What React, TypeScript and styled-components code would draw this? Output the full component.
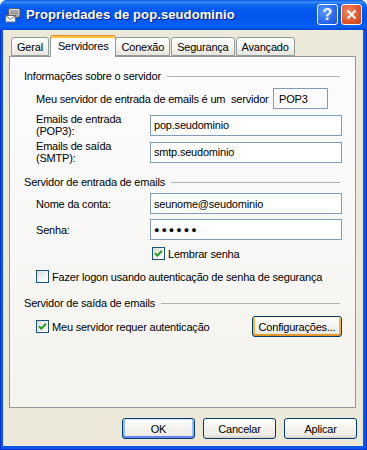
import React from "react";
import styled, { createGlobalStyle } from "styled-components";

const GlobalStyle = createGlobalStyle`
  html, body { margin: 0; padding: 0; background: #ffffff; }
  body {
    font-family: "Liberation Sans", Arial, sans-serif;
    font-size: 11px;
    letter-spacing: -0.2px;
    color: #000;
  }
  #root { width: 367px; height: 450px; }
`;

const Window = styled.div`
  width: 367px;
  height: 450px;
  display: flex;
  flex-direction: column;
  overflow: hidden;
  border-radius: 7px 7px 0 0;
  background: #0055ea;
`;

const TitleBar = styled.div`
  flex: none;
  height: 30px;
  box-sizing: border-box;
  display: flex;
  align-items: center;
  padding: 0 5px 1px 5px;
  background: linear-gradient(
    180deg,
    #0a5ae8 0%,
    #3d8ff8 7%,
    #1469f2 15%,
    #0058ee 35%,
    #0054eb 60%,
    #0460f6 85%,
    #0256ec 94%,
    #003fd9 100%
  );
`;

const TitleIcon = styled.svg`
  width: 16px;
  height: 16px;
  flex: none;
`;

const TitleText = styled.div`
  margin-left: 5px;
  font-family: "Liberation Sans", Arial, sans-serif;
  font-weight: bold;
  font-size: 13px;
  letter-spacing: 0.1px;
  color: #ffffff;
  text-shadow: 1px 1px 0 #0a1e8a;
  white-space: nowrap;
`;

const CaptionButtons = styled.div`
  margin-left: auto;
  display: flex;
  gap: 3px;
`;

const CaptionButton = styled.div<{ $kind: "help" | "close" }>`
  width: 21px;
  height: 21px;
  box-sizing: border-box;
  border: 1px solid #ffffff;
  border-radius: 3px;
  display: flex;
  align-items: center;
  justify-content: center;
  background: ${(p) =>
    p.$kind === "close"
      ? "radial-gradient(circle at 35% 35%, #f08a64 0%, #e0582c 55%, #c23d14 100%)"
      : "radial-gradient(circle at 35% 35%, #5f9cff 0%, #2d6cf0 55%, #1a4fd6 100%)"};
  color: #ffffff;
  font-family: "Liberation Sans", Arial, sans-serif;
  font-weight: bold;
  font-size: 16px;
  letter-spacing: 0;
  line-height: 1;
`;

const Frame = styled.div`
  flex: 1;
  display: flex;
  padding: 0 4px 4px 3px;
  background: #0758e8;
  box-shadow: inset 1px 0 0 #0831d9, inset -1px 0 0 #0831d9, inset 0 -1px 0 #0831d9;
  min-height: 0;
`;

const Body = styled.div`
  flex: 1;
  display: flex;
  flex-direction: column;
  background: #ece9d8;
  padding: 5px 7px 7px 6px;
`;

const TabStrip = styled.div`
  display: flex;
  align-items: flex-end;
  height: 22px;
  padding-left: 2px;
  margin-bottom: -1px;
  position: relative;
  z-index: 1;
`;

const Tab = styled.div<{ $active?: boolean }>`
  box-sizing: border-box;
  height: ${(p) => (p.$active ? "22px" : "19px")};
  margin: ${(p) => (p.$active ? "0 -1px 0 0" : "0 1px 1px 0")};
  padding: ${(p) => (p.$active ? "0 7px 2px" : "0 5px")};
  display: flex;
  align-items: center;
  border: 1px solid #919b9c;
  border-bottom: ${(p) => (p.$active ? "none" : "1px solid #919b9c")};
  border-top-color: ${(p) => (p.$active ? "#e68b2c" : "#919b9c")};
  border-radius: 3px 3px 0 0;
  background: ${(p) =>
    p.$active ? "#fcfcfe" : "linear-gradient(180deg, #ffffff 0%, #f4f3ee 60%, #e7e5dc 100%)"};
  box-shadow: ${(p) => (p.$active ? "inset 0 2px 0 #ffc83c" : "none")};
  position: relative;
  z-index: ${(p) => (p.$active ? 2 : 1)};
  white-space: nowrap;
`;

const Panel = styled.div`
  flex: 1;
  display: flex;
  flex-direction: column;
  border: 1px solid #919b9c;
  background: linear-gradient(180deg, #fcfcfe 0%, #f4f3ee 100%);
  padding: 12px 13px 0 14px;
`;

const GroupHeader = styled.div<{ $mt: number }>`
  display: flex;
  align-items: center;
  height: 13px;
  margin-top: ${(p) => p.$mt}px;
  white-space: nowrap;
  &::after {
    content: "";
    flex: 1;
    height: 1px;
    margin: 1px 2px 0 6px;
    background: #b4b2a8;
  }
`;

const ServerTypeRow = styled.div`
  display: flex;
  align-items: center;
  height: 21px;
  margin-top: 6px;
  padding-left: 12px;
  white-space: nowrap;
`;

const ReadOnlyBox = styled.div`
  margin-left: auto;
  margin-right: 14px;
  width: 55px;
  height: 21px;
  box-sizing: border-box;
  border: 1px solid #7f9db9;
  padding: 0 5px;
  display: flex;
  align-items: center;
  flex: none;
`;

const FieldRow = styled.div<{ $mt: number; $h: number }>`
  display: grid;
  grid-template-columns: 114px 1fr;
  align-items: center;
  min-height: ${(p) => p.$h}px;
  margin-top: ${(p) => p.$mt}px;
  padding-left: 12px;
`;

const FieldLabel = styled.label`
  line-height: 12px;
`;

const TextBox = styled.input<{ $secret?: boolean }>`
  width: 100%;
  height: 21px;
  box-sizing: border-box;
  margin: 0;
  border: 1px solid #7f9db9;
  background: #ffffff;
  padding: 0 3px;
  font-family: "Liberation Sans", Arial, sans-serif;
  font-size: ${(p) => (p.$secret ? "9px" : "11px")};
  letter-spacing: ${(p) => (p.$secret ? "2px" : "-0.2px")};
  color: #000;
  outline: none;
`;

const CheckRow = styled.div<{ $mt: number; $indent: number }>`
  display: flex;
  align-items: center;
  gap: 3px;
  margin-top: ${(p) => p.$mt}px;
  padding-left: ${(p) => p.$indent}px;
  white-space: nowrap;
`;

const CheckBox = styled.span`
  width: 13px;
  height: 13px;
  box-sizing: border-box;
  border: 1px solid #1c5180;
  background: linear-gradient(135deg, #dcdcd7 0%, #f2f2ef 55%, #ffffff 100%);
  display: flex;
  align-items: center;
  justify-content: center;
  flex: none;
`;

const AuthRow = styled.div`
  display: flex;
  align-items: center;
  height: 21px;
  margin-top: 7px;
`;

const XpButton = styled.button<{ $state?: "default" | "hot" }>`
  width: ${(p) => (p.$state === "hot" ? "90px" : "73px")};
  height: 21px;
  box-sizing: border-box;
  margin: 0;
  padding: 0;
  border: 1px solid #003c74;
  border-radius: 3px;
  background: linear-gradient(180deg, #ffffff 0%, #f6f5f1 40%, #ecebe6 85%, #d6d0c5 100%);
  font-family: "Liberation Sans", Arial, sans-serif;
  font-size: 11px;
  letter-spacing: -0.2px;
  color: #000;
  box-shadow: ${(p) =>
    p.$state === "hot"
      ? "inset 0 1px 0 #fff0cf, inset 0 -2px 0 #e5972c, inset 2px 0 0 #f9b332, inset -2px 0 0 #f9b332"
      : p.$state === "default"
      ? "inset 0 1px 0 #cee7ff, inset 0 -2px 0 #6982ee, inset 2px 0 0 #9ab8f3, inset -2px 0 0 #9ab8f3"
      : "none"};
`;

const PushRight = styled.div`
  margin-left: auto;
`;

const Footer = styled.div`
  display: flex;
  justify-content: flex-end;
  gap: 8px;
  margin-top: 10px;
  margin-right: -1px;
`;

const Check = () => (
  <svg width="9" height="9" viewBox="0 0 9 9">
    <path d="M1 4.2 L3.3 6.6 L8 1.8" stroke="#21a121" strokeWidth="2" fill="none" />
  </svg>
);

export default function App() {
  return (
    <>
      <GlobalStyle />
      <Window>
        <TitleBar>
          <TitleIcon viewBox="0 0 16 16">
            <defs>
              <linearGradient id="srv" x1="0" y1="0" x2="0" y2="1">
                <stop offset="0" stopColor="#e8e8e8" />
                <stop offset="1" stopColor="#9a9a9a" />
              </linearGradient>
            </defs>
            <rect x="3.5" y="1.5" width="11.5" height="9" rx="2" fill="url(#srv)" stroke="#5a5a5a" />
            <line x1="5" y1="4" x2="13" y2="4" stroke="#7a7a7a" />
            <line x1="5" y1="6" x2="13" y2="6" stroke="#7a7a7a" />
            <rect x="0.5" y="8.5" width="10" height="6.5" fill="#ffffff" stroke="#6a6a6a" />
            <path d="M0.5 8.5 L5.5 12.5 L10.5 8.5" stroke="#6a6a6a" fill="none" />
          </TitleIcon>
          <TitleText>Propriedades de pop.seudominio</TitleText>
          <CaptionButtons>
            <CaptionButton $kind="help">?</CaptionButton>
            <CaptionButton $kind="close">
              <svg width="11" height="11" viewBox="0 0 11 11">
                <path d="M1.5 1.5 L9.5 9.5 M9.5 1.5 L1.5 9.5" stroke="#ffffff" strokeWidth="2" />
              </svg>
            </CaptionButton>
          </CaptionButtons>
        </TitleBar>
        <Frame>
          <Body>
            <TabStrip>
              <Tab>Geral</Tab>
              <Tab $active>Servidores</Tab>
              <Tab>Conexão</Tab>
              <Tab>Segurança</Tab>
              <Tab>Avançado</Tab>
            </TabStrip>
            <Panel>
              <GroupHeader $mt={0}>Informações sobre o servidor</GroupHeader>
              <ServerTypeRow>
                <span>Meu servidor de entrada de emails é um&nbsp; servidor</span>
                <ReadOnlyBox>POP3</ReadOnlyBox>
              </ServerTypeRow>
              <FieldRow $mt={3} $h={26}>
                <FieldLabel>
                  Emails de entrada
                  <br />
                  (POP3):
                </FieldLabel>
                <TextBox readOnly value="pop.seudominio" />
              </FieldRow>
              <FieldRow $mt={1} $h={26}>
                <FieldLabel>
                  Emails de saída
                  <br />
                  (SMTP):
                </FieldLabel>
                <TextBox readOnly value="smtp.seudominio" />
              </FieldRow>

              <GroupHeader $mt={10}>Servidor de entrada de emails</GroupHeader>
              <FieldRow $mt={5} $h={21}>
                <FieldLabel>Nome da conta:</FieldLabel>
                <TextBox readOnly value="seunome@seudominio" />
              </FieldRow>
              <FieldRow $mt={5} $h={21}>
                <FieldLabel>Senha:</FieldLabel>
                <TextBox readOnly $secret value="●●●●●●" />
              </FieldRow>
              <CheckRow $mt={7} $indent={128}>
                <CheckBox>
                  <Check />
                </CheckBox>
                <span>Lembrar senha</span>
              </CheckRow>
              <CheckRow $mt={10} $indent={12}>
                <CheckBox />
                <span>Fazer logon usando autenticação de senha de segurança</span>
              </CheckRow>

              <GroupHeader $mt={13}>Servidor de saída de emails</GroupHeader>
              <AuthRow>
                <CheckRow $mt={0} $indent={12}>
                  <CheckBox>
                    <Check />
                  </CheckBox>
                  <span>Meu servidor requer autenticação</span>
                </CheckRow>
                <PushRight>
                  <XpButton $state="hot">Configurações...</XpButton>
                </PushRight>
              </AuthRow>
            </Panel>
            <Footer>
              <XpButton $state="default">OK</XpButton>
              <XpButton>Cancelar</XpButton>
              <XpButton>Aplicar</XpButton>
            </Footer>
          </Body>
        </Frame>
      </Window>
    </>
  );
}
